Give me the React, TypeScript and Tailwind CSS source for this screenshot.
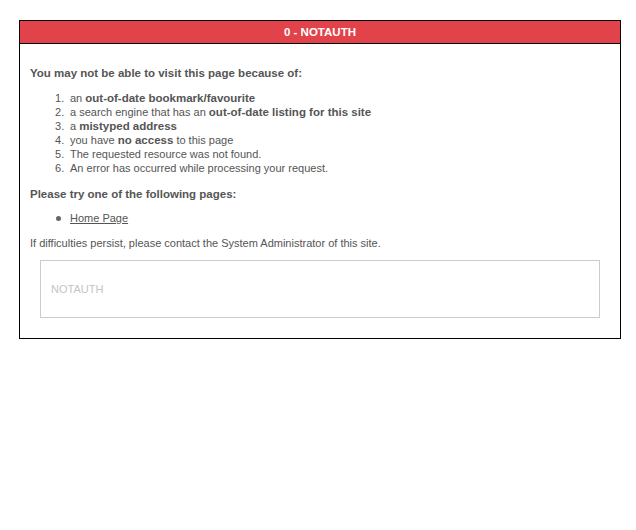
import React from "react";

export default function App() {
  const items: React.ReactNode[] = [
    <>an <b>out-of-date bookmark/favourite</b></>,
    <>a search engine that has an <b>out-of-date listing for this site</b></>,
    <>a <b>mistyped address</b></>,
    <>you have <b>no access</b> to this page</>,
    <>The requested resource was not found.</>,
    <>An error has occurred while processing your request.</>,
  ];
  return (
    <div className="w-[636px] h-[530px] bg-white pt-[20px] pl-[19px] text-[#555] text-[11px] leading-[14px]" style={{ fontFamily: '"Liberation Sans", Arial, sans-serif' }}>
      <div className="w-[602px] h-[319px] border border-black">
        <div className="h-[23px] bg-[#e2434b] border-b border-black flex items-center justify-center text-white font-bold text-[11.5px]">
          0 - NOTAUTH
        </div>
        <div className="px-[10px] pt-[21px]">
          <p className="font-bold text-[11.5px] leading-[16px]">You may not be able to visit this page because of:</p>
          <ol className="mt-[10px] pl-[25px]">
            {items.map((it, i) => (
              <li key={i} className="flex [&_b]:font-bold [&_b]:text-[11.5px]">
                <span className="w-[15px] shrink-0">{i + 1}.</span>
                <span>{it}</span>
              </li>
            ))}
          </ol>
          <p className="mt-[11px] font-bold text-[11.5px] leading-[16px]">Please try one of the following pages:</p>
          <ul className="mt-[9px] pl-[26px]">
            <li className="flex items-center">
              <span className="w-[14px] shrink-0 flex items-center">
                <span className="block w-[5px] h-[5px] rounded-full bg-[#666]" />
              </span>
              <a className="underline text-[#555]" href="#">Home Page</a>
            </li>
          </ul>
          <p className="mt-[11px]">If difficulties persist, please contact the System Administrator of this site.</p>
          <div className="mt-[10px] ml-[10px] w-[560px] h-[58px] border border-[#ccc] flex items-center pl-[10px] text-[#c4c4c4]">
            NOTAUTH
          </div>
        </div>
      </div>
    </div>
  );
}
